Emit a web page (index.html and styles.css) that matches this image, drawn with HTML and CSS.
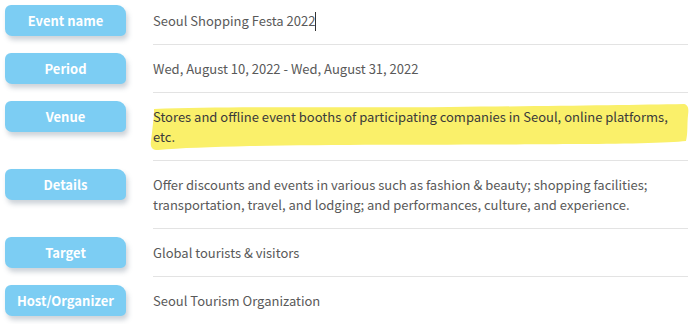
FILE: index.html
```html
<!DOCTYPE html>
<html lang="en">
<head>
<meta charset="utf-8">
<title>Seoul Shopping Festa 2022</title>
<link rel="stylesheet" href="styles.css">
</head>
<body>
<div class="info">
  <div class="row">
    <div class="label">Event name</div>
    <div class="value">Seoul Shopping Festa 2022<span class="caret"></span></div>
  </div>
  <div class="row">
    <div class="label">Period</div>
    <div class="value">Wed, August 10, 2022 - Wed, August 31, 2022</div>
  </div>
  <div class="row">
    <div class="label">Venue</div>
    <div class="value dark">
      <svg class="marker" viewBox="0 0 540 48" preserveAspectRatio="none" aria-hidden="true">
        <path d="M4 6 C80 3 200 5 300 4 C400 3 480 2 534 1 C538 2 539 5 538 12 C537 22 538 30 536 38 C520 40 470 41 420 41 C340 42 200 41 100 43 C60 44 30 45 8 47 C2 47 0 44 1 38 C2 30 3 20 4 12 Z" fill="#faf06a"/>
      </svg>
      <span class="txt">Stores and offline event booths of participating companies in Seoul, online platforms, etc.</span>
    </div>
  </div>
  <div class="row">
    <div class="label">Details</div>
    <div class="value">Offer discounts and events in various such as fashion &amp; beauty; shopping facilities; transportation, travel, and lodging; and performances, culture, and experience.</div>
  </div>
  <div class="row">
    <div class="label">Target</div>
    <div class="value">Global tourists &amp; visitors</div>
  </div>
  <div class="row">
    <div class="label">Host/Organizer</div>
    <div class="value">Seoul Tourism Organization</div>
  </div>
</div>
</body>
</html>
```
FILE: styles.css
```css
html, body {
  margin: 0;
  padding: 0;
  background: #ffffff;
}
body {
  font-family: "Noto Sans CJK KR", "Noto Sans", sans-serif;
  overflow: hidden;
}
.info {
  margin-top: -3px;
  padding-left: 5px;
  width: 683px;
}
.row {
  display: flex;
  align-items: flex-start;
}
.label {
  flex: 0 0 121px;
  height: 31px;
  margin-top: 8px;
  margin-right: 27px;
  background: #7ccdf3;
  border-radius: 6px 9px 5px 7px;
  box-shadow: 2px 4px 5px rgba(90, 110, 130, 0.3);
  color: #ffffff;
  font-weight: 700;
  font-size: 13px;
  line-height: 31px;
  text-align: center;
}
.value {
  flex: 1;
  position: relative;
  padding: 14px 0 13px;
  border-bottom: 1px solid #e3e3e3;
  color: #595959;
  font-size: 13px;
  line-height: 20px;
}
.row:last-child .value {
  border-bottom: none;
}
.value.dark {
  color: #3a3a3a;
}
.caret {
  display: inline-block;
  width: 1px;
  height: 19px;
  background: #333;
  vertical-align: -5px;
}
.marker {
  position: absolute;
  left: -3px;
  top: 10px;
  width: 540px;
  height: 48px;
}
.txt {
  position: relative;
}
```
